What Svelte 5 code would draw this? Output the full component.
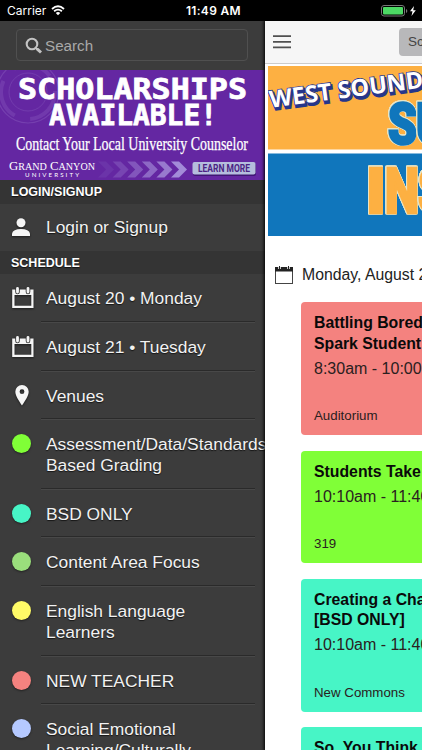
<script lang="ts">
    const days = [
        { label: "August 20 • Monday", icon: "calendar" },
        { label: "August 21 • Tuesday", icon: "calendar" },
        { label: "Venues", icon: "pin" },
    ];

    const tracks = [
        { label: "Assessment/Data/Standards-\nBased Grading", color: "#80ff37" },
        { label: "BSD ONLY", color: "#47f5c6" },
        { label: "Content Area Focus", color: "#9ade7c" },
        { label: "English Language\nLearners", color: "#fffb67" },
        { label: "NEW TEACHER", color: "#f4827f" },
        { label: "Social Emotional\nLearning/Culturally", color: "#b5c9ff" },
    ];

    const sessions = [
        {
            title: "Battling Boredom to\nSpark Student Learning",
            time: "8:30am - 10:00am",
            room: "Auditorium",
            color: "#f4827f",
        },
        {
            title: "Students Take Charge",
            time: "10:10am - 11:40am",
            room: "319",
            color: "#80ff37",
        },
        {
            title: "Creating a Change\n[BSD ONLY]",
            time: "10:10am - 11:40am",
            room: "New Commons",
            color: "#47f5c6",
        },
        {
            title: "So, You Think You Can",
            time: "10:10am - 11:40am",
            room: "Library",
            color: "#47f5c6",
        },
    ];

    // hero letters, each squeezed to its own width
    const letters = [
        { char: "S", x: 120, y: 77.5, width: 29, tone: "blue" },
        { char: "U", x: 148, y: 77.5, width: 32, tone: "blue" },
        { char: "I", x: 98, y: 152, width: 20, tone: "orange" },
        { char: "N", x: 117, y: 152, width: 34, tone: "orange" },
        { char: "S", x: 150, y: 152, width: 30, tone: "orange" },
    ];

    const chevrons = [0, 1, 2, 3, 4, 5];
</script>

<div class="phone">
    <header class="status">
        <span class="carrier">Carrier</span>
        <svg class="wifi" width="14" height="11" viewBox="0 0 14 11">
            <path d="M1 4Q7-1.4 13 4M3.1 6.3Q7 2.9 10.9 6.3" fill="none" stroke="#fff" stroke-width="1.8" />
            <path d="M4.8 8Q7 6.2 9.2 8L7 10.3Z" fill="#fff" />
        </svg>
        <span class="clock">11:49 AM</span>
        <svg class="battery" width="36" height="12" viewBox="0 0 36 12">
            <rect x=".5" y=".5" width="23" height="10.5" rx="2.5" fill="none" stroke="#777" />
            <rect x="2" y="2" width="20" height="7.5" rx="1" fill="#4cd964" />
            <path d="M25 4v4q1.3-.6 1.3-2T25 4" fill="#777" />
            <path d="M33 1l-4 5.2h2.5L30.5 11l4.3-5.8h-2.6Z" fill="#fff" />
        </svg>
    </header>

    <div class="panes">
        <nav class="drawer">
            <div class="search-wrap">
                <div class="search">
                    <svg width="18" height="17" viewBox="0 0 18 17">
                        <circle cx="7" cy="7" r="5.3" fill="none" stroke="#c4c4c4" stroke-width="2.1" />
                        <path d="M10.8 11h2.6l3.6 3.4-2 2-4.2-3.6Z" fill="#c4c4c4" />
                    </svg>
                    <span>Search</span>
                </div>
            </div>

            <svg class="ad" width="265" height="110" viewBox="0 0 265 110">
                <rect width="265" height="110" fill="#6427a2" />
                <g fill="none" stroke="#8050b8">
                    <circle cx="28" cy="22" r="31" stroke-width="1.2" opacity=".6" />
                    <circle cx="28" cy="22" r="27" stroke-width="4" stroke-dasharray="40 16" opacity=".45" />
                    <circle cx="28" cy="22" r="19" stroke-width="1" opacity=".5" />
                </g>
                <g fill="#fff">
                    <text class="slab" x="18" y="28.5" textLength="229" lengthAdjust="spacingAndGlyphs">SCHOLARSHIPS</text>
                    <text class="slab" x="49" y="54.5" textLength="168" lengthAdjust="spacingAndGlyphs">AVAILABLE!</text>
                    <text class="serif contact" x="16" y="79.5" textLength="232" lengthAdjust="spacingAndGlyphs">Contact Your Local University Counselor</text>
                    <text class="serif" x="9" y="99.5" font-size="12" textLength="86" lengthAdjust="spacingAndGlyphs">G<tspan font-size="9.5">RAND</tspan> C<tspan font-size="9.5">ANYON</tspan></text>
                    <text class="sans" x="25" y="106.5" font-size="6.2" textLength="54">UNIVERSITY</text>
                </g>
                {#each chevrons as n}
                    <path
                        d="M0 0h8l8 8-8 8H0l8-8Z"
                        fill="#a894dc"
                        opacity={0.12 + n * 0.16}
                        transform="translate({98 + n * 14.6} 91.5)"
                    />
                {/each}
                <rect x="193" y="93" width="63" height="13" rx="2" fill="#401675" />
                <rect x="192.5" y="92" width="63" height="12.5" rx="2" fill="#b5bddd" />
                <text class="learn" x="198" y="102.3" textLength="52" lengthAdjust="spacingAndGlyphs">LEARN MORE</text>
            </svg>

            <h2>LOGIN/SIGNUP</h2>
            <div class="item login">
                <svg class="icon" width="18" height="19" viewBox="0 0 18 19">
                    <circle cx="9" cy="4.7" r="4.5" fill="#f5f5f5" />
                    <path d="M0 18v-2.5Q1 11 9 11t9 4.5V18Z" fill="#f5f5f5" />
                </svg>
                <span class="label">Login or Signup</span>
            </div>

            <h2>SCHEDULE</h2>
            {#each days as day}
                <div class="item">
                    {#if day.icon === "calendar"}
                        <svg class="icon cal" width="22" height="22" viewBox="0 0 22 22">
                            <path d="M.2 2.5h21.3v18.500H.2ZM2.500 8v10.800h16.800V8Z" fill="#f5f5f5" fill-rule="evenodd" />
                            <path d="M5.500 1.500v3.500M16 1.500v3.500" stroke="#3c3c3c" stroke-width="4.600" stroke-linecap="round" />
                            <path d="M5.500 1.500v3.500M16 1.500v3.500" stroke="#f5f5f5" stroke-width="2.800" stroke-linecap="round" />
                        </svg>
                    {:else}
                        <svg class="icon pin" width="14" height="21" viewBox="0 0 14 21">
                            <path d="M7 0a6.7 6.7 0 0 0-6.700 6.800C.3 11.500 7 20.500 7 20.500s6.700-9 6.700-13.700A6.700 6.700 0 0 0 7 0Zm0 4.300a2.400 2.400 0 1 1 0 4.800 2.400 2.400 0 0 1 0-4.800Z" fill="#f5f5f5" fill-rule="evenodd" />
                        </svg>
                    {/if}
                    <span class="label">{day.label}</span>
                </div>
            {/each}
            {#each tracks as track}
                <div class="item">
                    <i class="dot" style="background: {track.color}"></i>
                    <span class="label">{track.label}</span>
                </div>
            {/each}
        </nav>

        <main>
            <div class="topbar">
                <svg width="18" height="14" viewBox="0 0 18 14">
                    <path d="M0 1.2h18M0 6.800h18M0 12.400h18" stroke="#505050" stroke-width="1.700" />
                </svg>
                <span class="tab">Schedule</span>
            </div>

            <svg class="hero" width="154" height="170" viewBox="0 0 154 170">
                <rect width="154" height="83.5" fill="#fdb042" />
                <rect y="87.5" width="154" height="82.5" fill="#1076bc" />
                {#each letters as l}
                    <text class="impact {l.tone}" x={l.x} y={l.y - (l.tone === "orange" ? 5 : 0)} textLength={l.width} lengthAdjust="spacingAndGlyphs">{l.char}</text>
                {/each}
                <g class="west" transform="rotate(-7.5 4 42)">
                    <text x="3.5" y="44" textLength="155" lengthAdjust="spacingAndGlyphs" fill="#26368b" stroke="#26368b" stroke-width="2.5">WEST SOUND</text>
                    <text x="2.5" y="41.5" textLength="155" lengthAdjust="spacingAndGlyphs" fill="#fff" stroke="#26368b" stroke-width="1.6" paint-order="stroke">WEST SOUND</text>
                </g>
            </svg>

            <div class="date">
                <svg width="18" height="18" viewBox="0 0 18 18">
                    <rect x=".5" y="1.5" width="17" height="16" fill="#fff" stroke="#444" />
                    <path d="M0 1h18v4.5H0Z" fill="#222" />
                    <path d="M4.5 0v3M13.5 0v3" stroke="#fff" stroke-width="2.5" />
                    <path d="M4.5 0v3M13.5 0v3" stroke="#222" />
                </svg>
                <span>Monday, August 20</span>
            </div>

            {#each sessions as s}
                <article style="background: {s.color}">
                    <h3>{s.title}</h3>
                    <p class="time">{s.time}</p>
                    <p class="room">{s.room}</p>
                </article>
            {/each}
        </main>
    </div>
</div>

<style>
    :global(body) {
        margin: 0;
        overflow: hidden;
    }
    .phone {
        width: 422px;
        height: 750px;
        overflow: hidden;
        display: flex;
        flex-direction: column;
        background: #000;
        font-family: "Liberation Sans", Arial, sans-serif;
    }
    svg {
        display: block;
        flex: none;
    }
    .status {
        height: 21px;
        flex: none;
        display: flex;
        align-items: center;
        color: #fff;
        font: 12px/21px Inter, sans-serif;
    }
    .carrier {
        width: 44px;
        padding-left: 7px;
    }
    .clock {
        margin-left: 121px;
        width: 195px;
        font-weight: 600;
        letter-spacing: 0.3px;
    }
    .panes {
        display: flex;
        height: 729px;
        overflow: hidden;
    }
    .drawer {
        width: 265px;
        flex: none;
        overflow: hidden;
        background: #3c3c3c;
        color: #f2f2f2;
    }
    .search-wrap {
        height: 49px;
        padding: 8px 17px 0 16px;
        box-sizing: border-box;
    }
    .search {
        height: 32px;
        box-sizing: border-box;
        border: 1px solid #505050;
        border-radius: 4px;
        display: flex;
        align-items: center;
        gap: 2px;
        padding-left: 8px;
        font-size: 15.2px;
        color: #a9a9a9;
    }
    .ad .slab {
        font: bold 29px "DejaVu Sans Mono", monospace;
        stroke: #fff;
        stroke-width: 0.8px;
    }
    .serif {
        font-family: "Liberation Serif", serif;
    }
    .contact {
        font-size: 18.5px;
        stroke: #fff;
        stroke-width: 0.25px;
    }
    .sans {
        font-family: Lato, sans-serif;
    }
    .learn {
        font: bold 10px Roboto, sans-serif;
        fill: #4c2384;
    }
    h2 {
        margin: 0;
        height: 23.5px;
        padding-left: 11px;
        background: #343434;
        font-size: 12.5px;
        line-height: 24px;
        color: #fff;
        text-shadow: 0 1px 1px #111;
    }
    .item {
        position: relative;
        display: flex;
        padding: 14px 0 14.3px 11px;
        line-height: 20.5px;
        font-size: 17.4px;
        text-shadow: 0 1px 1px #151515;
    }
    .item:not(.login)::after {
        content: "";
        position: absolute;
        left: 41px;
        right: 10px;
        bottom: 0;
        height: 1px;
        background: #2a2a2a;
        border-bottom: 1px solid #484848;
    }
    .login {
        padding: 13.5px 0 13px 11px;
    }
    .icon {
        margin: 1px 16px 0 1px;
        height: 19px;
        filter: drop-shadow(0 1px 1px #1c1c1c);
    }
    .cal {
        height: 22px;
        margin: -1px 12px -3px 1px;
    }
    .pin {
        height: 21px;
        margin: -1px 17px 0 4px;
    }
    .dot {
        width: 19px;
        height: 19px;
        flex: none;
        border-radius: 50%;
        margin: 0 15px 0 1px;
        box-shadow: 0 1px 2px #222;
    }
    .label {
        white-space: pre;
    }
    main {
        width: 157px;
        flex: none;
        background: #fff;
        position: relative;
        box-shadow: 0 0 3px 1px #000;
    }
    .topbar {
        height: 42px;
        background: #f6f6f6;
        border-bottom: 1px solid #ccc;
        display: flex;
        align-items: center;
        padding-left: 8px;
        gap: 108px;
    }
    .tab {
        height: 28px;
        line-height: 28px;
        padding: 0 9px;
        border-radius: 4px;
        background: #b8b8ba;
        color: #444;
        font-size: 13.5px;
    }
    .hero {
        margin: 2px 0 0 3px;
    }
    .impact {
        font: 900 60px Roboto, "Liberation Sans", sans-serif;
        stroke-width: 2.5px;
        filter: drop-shadow(0.7px 0 0 #e8e4c4) drop-shadow(-0.7px 0 0 #e8e4c4) drop-shadow(0 0.7px 0 #e8e4c4)
            drop-shadow(0 -0.7px 0 #e8e4c4);
    }
    .blue {
        fill: #1076bc;
        stroke: #1076bc;
        font-size: 57px;
    }
    .orange {
        fill: #fdb042;
        stroke: #fdb042;
        font-size: 63px;
    }
    .west {
        font: bold 23.5px "Open Sans", sans-serif;
    }
    .date {
        height: 66px;
        display: flex;
        align-items: center;
        gap: 9px;
        padding: 12px 0 0 10px;
        box-sizing: border-box;
        font-size: 15.8px;
        color: #222;
        white-space: nowrap;
    }
    article {
        margin: 0 -200px 15.5px 36px;
        padding: 11px 13px 10px;
        border-radius: 4px;
    }
    h3 {
        margin: 0;
        font-size: 15.8px;
        line-height: 20.5px;
        color: #0a0a0a;
        white-space: pre;
    }
    p {
        margin: 0;
        white-space: nowrap;
    }
    .time {
        margin-top: 4.5px;
        font-size: 16px;
        line-height: 20px;
        color: #2a2020;
    }
    .room {
        margin-top: 28.5px;
        font-size: 13.3px;
        line-height: 18px;
        color: #2a2020;
    }
</style>
